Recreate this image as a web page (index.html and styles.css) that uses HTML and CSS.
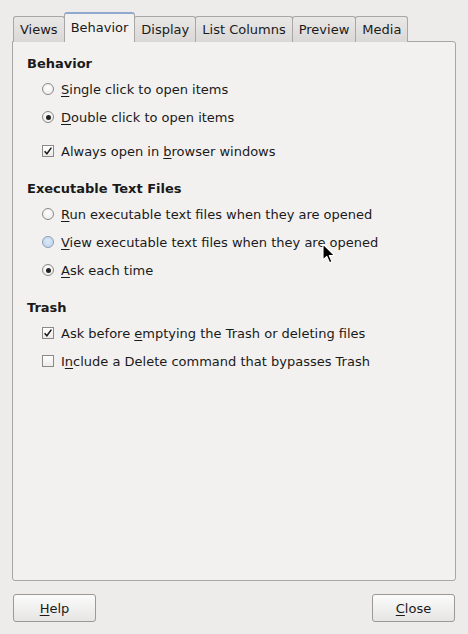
FILE: index.html
```html
<!DOCTYPE html>
<html>
<head>
<meta charset="utf-8">
<link rel="stylesheet" href="styles.css">
</head>
<body>
<div class="dialog">
  <div class="tabs">
    <div class="tab">Views</div>
    <div class="tab active">Behavior</div>
    <div class="tab">Display</div>
    <div class="tab">List Columns</div>
    <div class="tab">Preview</div>
    <div class="tab">Media</div>
  </div>
  <div class="panel">
    <div class="section">
      <div class="heading">Behavior</div>
      <div class="row"><span class="radio"></span><span class="label"><u>S</u>ingle click to open items</span></div>
      <div class="row"><span class="radio on"></span><span class="label"><u>D</u>ouble click to open items</span></div>
      <div class="row spaced"><span class="check on"><svg viewBox="0 0 12 12" width="12" height="12"><path d="M2.6 6.2 L4.9 8.7 L9.4 2.6" fill="none" stroke="#1a1a1a" stroke-width="1.5"/></svg></span><span class="label">Always open in <u>b</u>rowser windows</span></div>
    </div>
    <div class="section">
      <div class="heading">Executable Text Files</div>
      <div class="row"><span class="radio"></span><span class="label"><u>R</u>un executable text files when they are opened</span></div>
      <div class="row"><span class="radio hover"></span><span class="label"><u>V</u>iew executable text files when they are opened</span></div>
      <div class="row"><span class="radio on"></span><span class="label"><u>A</u>sk each time</span></div>
    </div>
    <div class="section">
      <div class="heading">Trash</div>
      <div class="row"><span class="check on"><svg viewBox="0 0 12 12" width="12" height="12"><path d="M2.6 6.2 L4.9 8.7 L9.4 2.6" fill="none" stroke="#1a1a1a" stroke-width="1.5"/></svg></span><span class="label">Ask before <u>e</u>mptying the Trash or deleting files</span></div>
      <div class="row"><span class="check"></span><span class="label">I<u>n</u>clude a Delete command that bypasses Trash</span></div>
    </div>
  </div>
  <div class="buttons">
    <button class="btn"><u>H</u>elp</button>
    <button class="btn"><u>C</u>lose</button>
  </div>
</div>
<svg class="cursor" width="14" height="22" viewBox="0 0 14 22"><path d="M1 1 L1 17 L4.8 13.4 L7.6 19.8 L10 18.8 L7.3 12.6 L12.4 12.4 Z" fill="#000" stroke="#fff" stroke-width="1.1" stroke-linejoin="round"/></svg>
</body>
</html>
```
FILE: styles.css
```css
html, body {
  margin: 0;
  padding: 0;
}
body {
  background: #edeceb;
  font-family: "DejaVu Sans", sans-serif;
  font-size: 13px;
  color: #1a1a1a;
  width: 468px;
  height: 634px;
  position: relative;
  overflow: hidden;
}
.dialog {
  padding: 12px 12px 0 12px;
}
.tabs {
  display: flex;
  align-items: flex-end;
  padding-left: 1px;
  height: 30px;
  margin-bottom: -1px;
  position: relative;
  z-index: 1;
}
.tab {
  height: 26px;
  box-sizing: border-box;
  padding: 0 6px;
  display: flex;
  align-items: center;
  border: 1px solid #a8a7a5;
  border-bottom: none;
  border-radius: 3px 3px 0 0;
  background: linear-gradient(#e9e8e7, #d9d8d6);
  color: #1a1a1a;
  font-size: 13px;
  margin-right: -1px;
}
.tab.active {
  height: 30px;
  background: #f2f1f0;
  border-color: #a8a7a5;
  border-top: 2px solid #8fa9cf;
  padding-bottom: 2px;
  position: relative;
  z-index: 2;
}
.panel {
  border: 1px solid #a8a7a5;
  border-radius: 0 3px 3px 3px;
  background: #f2f1f0;
  height: 526px;
  width: 428px;
  padding: 12px 0 0 14px;
  display: flex;
  flex-direction: column;
  gap: 14px;
}
.heading {
  font-weight: bold;
  line-height: 18px;
  height: 18px;
  padding-top: 1px;
  margin-bottom: 2px;
  font-size: 13px;
}
.row {
  display: flex;
  align-items: center;
  height: 28px;
  padding-left: 15px;
  font-size: 13px;
}
.row.spaced {
  margin-top: 6px;
}
.label {
  margin-left: 7px;
}
u {
  text-decoration: underline;
  text-underline-offset: 2px;
}
.radio {
  width: 12px;
  height: 12px;
  box-sizing: border-box;
  border-radius: 50%;
  border: 1px solid #8a8986;
  background: radial-gradient(circle at 50% 40%, #ffffff, #e8e7e6);
  position: relative;
  flex: none;
}
.radio.on::after {
  content: "";
  position: absolute;
  left: 2.5px;
  top: 2.5px;
  width: 5px;
  height: 5px;
  border-radius: 50%;
  background: #222;
}
.radio.hover {
  background: radial-gradient(circle at 50% 40%, #dbe8f7, #bcd2ee);
  border-color: #8d9bb0;
}
.check {
  width: 12px;
  height: 12px;
  box-sizing: border-box;
  border: 1px solid #8a8986;
  background: linear-gradient(#ffffff, #ecebea);
  flex: none;
  position: relative;
}
.check svg {
  position: absolute;
  left: -1px;
  top: -1px;
}
.buttons {
  display: flex;
  justify-content: space-between;
  padding: 13px 1px 0 1px;
}
.btn {
  width: 83px;
  height: 28px;
  border: 1px solid #9a9997;
  border-radius: 3px;
  background: linear-gradient(#fbfbfb, #e6e5e4);
  font-family: "DejaVu Sans", sans-serif;
  font-size: 13px;
  color: #1a1a1a;
  padding: 0;
}
.cursor {
  position: absolute;
  left: 322px;
  top: 243px;
}
```
